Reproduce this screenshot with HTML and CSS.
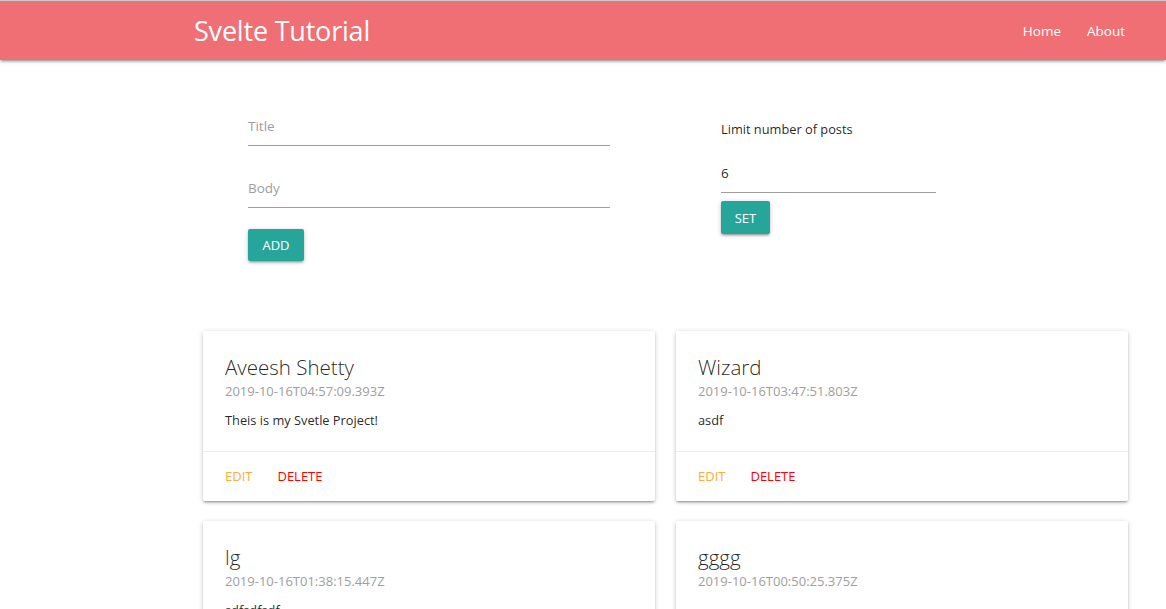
FILE: index.html
```html
<!DOCTYPE html>
<html lang="en">
<head>
<meta charset="utf-8">
<title>Svelte Tutorial</title>
<link rel="stylesheet" href="styles.css">
</head>
<body>
<nav class="navbar">
  <a class="brand" href="#">Svelte Tutorial</a>
  <ul class="nav-links">
    <li><a href="#">Home</a></li>
    <li><a href="#">About</a></li>
  </ul>
</nav>
<main class="main">
  <section class="forms">
    <div class="post-form">
      <input class="field" type="text" placeholder="Title">
      <input class="field field-body" type="text" placeholder="Body">
      <button class="btn btn-add">ADD</button>
    </div>
    <div class="limit-form">
      <label class="limit-label">Limit number of posts</label>
      <input class="field field-limit" type="text" value="6">
      <button class="btn btn-set">SET</button>
    </div>
  </section>
  <section class="cards">
    <article class="card">
      <div class="card-content">
        <h2 class="card-title">Aveesh Shetty</h2>
        <p class="card-date">2019-10-16T04:57:09.393Z</p>
        <p class="card-text">Theis is my Svetle Project!</p>
      </div>
      <div class="card-action">
        <a class="act edit" href="#">EDIT</a>
        <a class="act delete" href="#">DELETE</a>
      </div>
    </article>
    <article class="card">
      <div class="card-content">
        <h2 class="card-title">Wizard</h2>
        <p class="card-date">2019-10-16T03:47:51.803Z</p>
        <p class="card-text">asdf</p>
      </div>
      <div class="card-action">
        <a class="act edit" href="#">EDIT</a>
        <a class="act delete" href="#">DELETE</a>
      </div>
    </article>
    <article class="card">
      <div class="card-content">
        <h2 class="card-title">lg</h2>
        <p class="card-date">2019-10-16T01:38:15.447Z</p>
        <p class="card-text">sdfsdfsdf</p>
      </div>
      <div class="card-action">
        <a class="act edit" href="#">EDIT</a>
        <a class="act delete" href="#">DELETE</a>
      </div>
    </article>
    <article class="card">
      <div class="card-content">
        <h2 class="card-title">gggg</h2>
        <p class="card-date">2019-10-16T00:50:25.375Z</p>
        <p class="card-text"></p>
      </div>
      <div class="card-action">
        <a class="act edit" href="#">EDIT</a>
        <a class="act delete" href="#">DELETE</a>
      </div>
    </article>
  </section>
</main>
</body>
</html>
```
FILE: styles.css
```css
* { box-sizing: border-box; }
html, body { margin: 0; padding: 0; }
body {
  font-family: "Open Sans", "Noto Sans", sans-serif;
  font-size: 14px;
  color: rgba(0,0,0,0.87);
  background: #fff;
  height: 609px;
  overflow: hidden;
}
.navbar {
  height: 60px;
  border-top: 1px solid #c9c9c9;
  background: #ef6f74;
  display: flex;
  align-items: center;
  justify-content: space-between;
  padding: 0 41px 0 194px;
  box-shadow: 0 2px 2px 0 rgba(0,0,0,.14), 0 3px 1px -2px rgba(0,0,0,.12), 0 1px 5px 0 rgba(0,0,0,.2);
  position: relative;
  z-index: 2;
}
.brand {
  color: #fff;
  text-decoration: none;
  font-size: 27px;
  line-height: 1;
  letter-spacing: -0.2px;
}
.nav-links {
  list-style: none;
  display: flex;
  gap: 26px;
  margin: 0;
  padding: 0;
}
.nav-links a {
  color: #fff;
  text-decoration: none;
  font-size: 13.5px;
}
.main { padding-top: 42px; }
.forms {
  display: flex;
  padding-left: 248px;
}
.post-form { width: 362px; display: flex; flex-direction: column; align-items: flex-start; }
.limit-form { width: 215px; margin-left: 111px; display: flex; flex-direction: column; align-items: flex-start; }
.field {
  width: 100%;
  height: 44px;
  border: none;
  border-bottom: 1px solid #9e9e9e;
  outline: none;
  padding: 5px 0 0;
  font-family: inherit;
  font-size: 13.5px;
  color: rgba(0,0,0,0.87);
  background: transparent;
}
.field::placeholder { color: #9e9e9e; }
.field-body { margin-top: 18px; }
.limit-label {
  font-size: 12.8px;
  line-height: 20px;
  margin-top: 17px;
  color: rgba(0,0,0,0.87);
}
.field-limit { margin-top: 10px; }
.btn {
  border: none;
  background: #26a69a;
  color: #fff;
  font-family: inherit;
  font-size: 13px;
  height: 32px;
  padding: 0 15px;
  border-radius: 2px;
  box-shadow: 0 2px 2px 0 rgba(0,0,0,.14), 0 3px 1px -2px rgba(0,0,0,.12), 0 1px 5px 0 rgba(0,0,0,.2);
}
.btn-add { margin-top: 21px; width: 56px; padding: 0; }
.btn-set { margin-top: 8px; width: 49px; height: 33px; padding: 0; }
.cards {
  margin-top: 70px;
  margin-left: 203px;
  width: 925px;
  display: grid;
  grid-template-columns: 452px 452px;
  column-gap: 21px;
  row-gap: 20px;
}
.card {
  background: #fff;
  border-radius: 2px;
  box-shadow: 0 2px 2px 0 rgba(0,0,0,.14), 0 3px 1px -2px rgba(0,0,0,.12), 0 1px 5px 0 rgba(0,0,0,.2);
}
.card-content { padding: 22px 22px 22px; }
.card-title {
  margin: 0;
  font-size: 20.5px;
  font-weight: 300;
  line-height: 28px;
  color: rgba(0,0,0,0.87);
}
.card-date {
  margin: 0;
  color: #9e9e9e;
  font-size: 13px;
  line-height: 20px;
}
.card-text {
  margin: 10px 0 0;
  font-size: 12.8px;
  line-height: 18px;
  min-height: 18px;
}
.card-action {
  border-top: 1px solid rgba(160,160,160,0.2);
  padding: 16px 22px;
  display: flex;
  gap: 25px;
  line-height: 17px;
}
.act { text-decoration: none; font-size: 13px; }
.edit { color: #ffab40; }
.delete { color: #ff0000; }
```
